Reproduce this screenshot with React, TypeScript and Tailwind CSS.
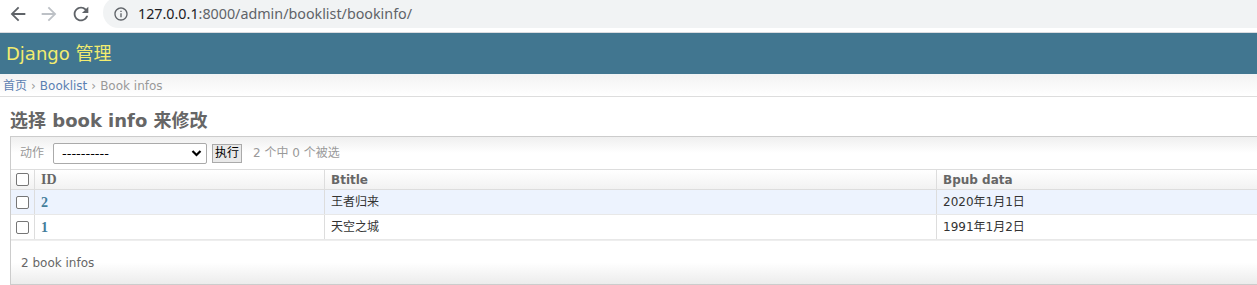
import React from "react";

const FONT = { fontFamily: '"DejaVu Sans", Verdana, "Noto Sans CJK SC", sans-serif' };
const SERIF = { fontFamily: '"Liberation Serif", "Noto Sans CJK SC", serif' };

function Box() {
  return <div className="w-[13px] h-[13px] rounded-[2px] border border-[#767676] bg-white" />;
}

function Row({ id, title, date, bg }: { id: string; title: string; date: string; bg: string }) {
  return (
    <div className={`flex h-[25px] border-b border-[#e8e8e8] ${bg}`}>
      <div className="w-[24px] flex items-center justify-center border-r border-[#ddd]">
        <Box />
      </div>
      <div className="w-[290px] flex items-center pl-[6px] border-r border-[#ddd]">
        <span className="text-[14px] font-bold text-[#447e9b]" style={SERIF}>{id}</span>
      </div>
      <div className="w-[612px] flex items-center pl-[6px] border-r border-[#ddd] text-[12px] text-[#333]">{title}</div>
      <div className="flex-1 flex items-center pl-[6px] text-[12px] text-[#333]">{date}</div>
    </div>
  );
}

export default function App() {
  return (
    <div className="w-[1257px] h-[285px] overflow-hidden bg-white" style={FONT}>
      {/* browser toolbar */}
      <div className="h-[32px] flex items-start bg-white">
        <div className="flex items-center h-[28px]">
          <svg className="ml-[7px]" width="22" height="22" viewBox="0 0 24 24">
            <path d="M20 11H7.83l5.59-5.59L12 4l-8 8 8 8 1.41-1.41L7.83 13H20v-2z" fill="#5f6368" />
          </svg>
          <svg className="ml-[9px]" width="22" height="22" viewBox="0 0 24 24">
            <path d="M12 4l-1.41 1.41L16.17 11H4v2h12.17l-5.58 5.59L12 20l8-8z" fill="#bdc1c6" />
          </svg>
          <svg className="ml-[10px]" width="22" height="22" viewBox="0 0 24 24">
            <path d="M17.65 6.35A7.958 7.958 0 0 0 12 4c-4.42 0-7.99 3.58-7.99 8s3.57 8 7.99 8c3.73 0 6.84-2.55 7.73-6h-2.08A5.99 5.99 0 0 1 12 18c-3.31 0-6-2.69-6-6s2.69-6 6-6c1.66 0 3.14.69 4.22 1.78L13 11h7V4l-2.35 2.35z" fill="#5f6368" />
          </svg>
        </div>
        <div className="ml-[11px] mt-[-3px] h-[31px] flex-1 rounded-l-full bg-[#f1f3f4] flex items-center pt-[3px]">
          <svg className="ml-[10px]" width="16" height="16" viewBox="0 0 24 24">
            <path d="M11 7h2v2h-2zm0 4h2v6h-2zm1-9C6.48 2 2 6.48 2 12s4.48 10 10 10 10-4.48 10-10S17.52 2 12 2zm0 18c-4.41 0-8-3.59-8-8s3.59-8 8-8 8 3.59 8 8-3.59 8-8 8z" fill="#5f6368" />
          </svg>
          <span className="ml-[9px] text-[14.3px] text-[#202124]" style={{ fontFamily: '"Noto Sans", sans-serif' }}>
            127.0.0.1<span className="text-[#5f6368]">:8000/admin/booklist/bookinfo/</span>
          </span>
        </div>
      </div>
      <div className="h-[1px] bg-[#dadce0]" />
      {/* header */}
      <div className="h-[42px] bg-[#417690] flex items-center pl-[6px] border-b border-[#f0f4f6]">
        <span className="text-[18px] text-[#f2ec6f]">Django 管理</span>
      </div>
      {/* breadcrumbs */}
      <div className="h-[22px] bg-gradient-to-b from-[#f3f3f3] to-white border-b border-[#ddd] flex items-center pl-[3px] text-[12px] text-[#999]">
        <span className="text-[#5b80b2]">首页</span>
        <span className="mx-[4px]">›</span>
        <span className="text-[#5b80b2]">Booklist</span>
        <span className="mx-[4px]">›</span>
        <span>Book infos</span>
      </div>
      {/* content */}
      <div className="pl-[10px]">
        <h1 className="h-[39px] flex items-center text-[18px] font-bold text-[#666] pt-[8px]">选择 book info 来修改</h1>
        <div className="w-[1260px] border border-[#ccc]">
          {/* actions */}
          <div className="h-[33px] bg-gradient-to-b from-[#efefef] via-white to-white flex items-center pl-[9px] text-[12px] border-b border-[#ddd]">
            <span className="text-[#999]">动作</span>
            <div className="ml-[9px] w-[154px] h-[21px] border border-[#aaa] rounded-[2px] bg-white flex items-center justify-between pl-[8px] pr-[4px]">
              <span className="text-[13px] text-black leading-none">----------</span>
              <svg width="11" height="9" viewBox="0 0 11 9">
                <path d="M1.5 2 L5.5 6 L9.5 2" stroke="#000" strokeWidth="2.2" fill="none" />
              </svg>
            </div>
            <div className="ml-[5px] w-[30px] h-[19px] border border-[#aaa] bg-[#e9e9e9] flex items-center justify-center text-[12px] text-black">执行</div>
            <span className="ml-[11px] text-[#999]">2 个中 0 个被选</span>
          </div>
          {/* header row */}
          <div className="flex h-[20px] border-b border-[#ddd] bg-gradient-to-b from-white to-[#f2f2f2] text-[12px] font-bold text-[#666]">
            <div className="w-[24px] flex items-center justify-center border-r border-[#ddd]">
              <Box />
            </div>
            <div className="w-[290px] flex items-center pl-[6px] border-r border-[#ddd]">
              <span className="text-[14px]" style={SERIF}>ID</span>
            </div>
            <div className="w-[612px] flex items-center pl-[6px] border-r border-[#ddd]">Btitle</div>
            <div className="flex-1 flex items-center pl-[6px]">Bpub data</div>
          </div>
          <Row id="2" title="王者归来" date="2020年1月1日" bg="bg-[#edf3fe]" />
          <Row id="1" title="天空之城" date="1991年1月2日" bg="bg-white" />
          {/* paginator */}
          <div className="h-[44px] border-t border-[#eee] bg-gradient-to-b from-white via-white to-[#ececec] flex items-center pl-[10px] text-[12px] text-[#666]">
            2 book infos
          </div>
        </div>
      </div>
    </div>
  );
}
